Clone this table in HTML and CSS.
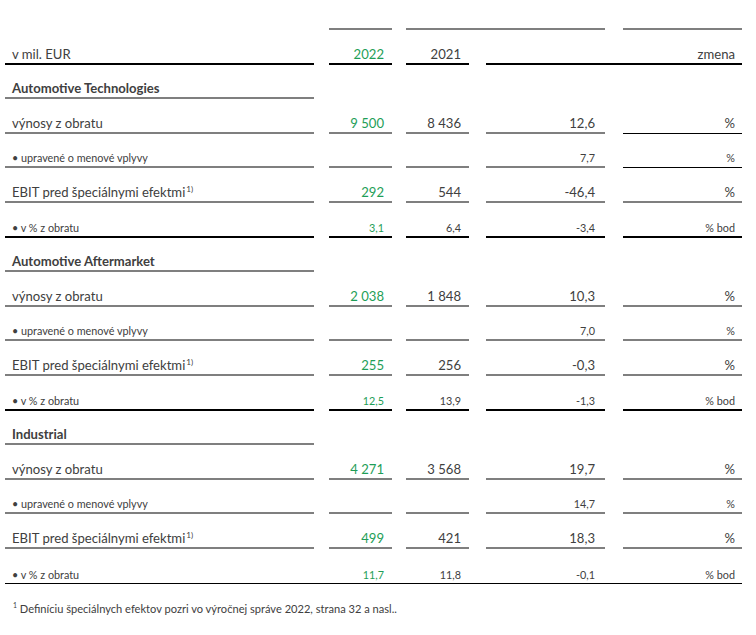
FILE: index.html
```html
<!DOCTYPE html>
<html lang="sk">
<head>
<meta charset="utf-8">
<title>Segmenty</title>
<link rel="stylesheet" href="styles.css">
</head>
<body>
<div class="sheet">
  <div class="row top">
    <div class="cell c3 gray"></div>
    <div class="cell c5-7 gray"></div>
    <div class="cell c9 gray"></div>
  </div>
  <div class="row">
    <div class="cell c1 black lab"><span>v mil. EUR</span></div>
    <div class="cell c3 black num green"><span>2022</span></div>
    <div class="cell c5 black num"><span>2021</span></div>
    <div class="cell c7-9 black unit"><span>zmena</span></div>
  </div>

  <div class="row">
    <div class="cell c1 gray lab bold"><span>Automotive Technologies</span></div>
  </div>
  <div class="row">
    <div class="cell c1 gray lab"><span>výnosy z obratu</span></div>
    <div class="cell c3 gray num green"><span>9 500</span></div>
    <div class="cell c5 gray num"><span>8 436</span></div>
    <div class="cell c7 gray chg"><span>12,6</span></div>
    <div class="cell c9 thin unit"><span>%</span></div>
  </div>
  <div class="row small">
    <div class="cell c1 gray lab"><span>• upravené o menové vplyvy</span></div>
    <div class="cell c3 gray num green"></div>
    <div class="cell c5 gray num"></div>
    <div class="cell c7 gray chg"><span>7,7</span></div>
    <div class="cell c9 thin unit"><span>%</span></div>
  </div>
  <div class="row">
    <div class="cell c1 gray lab"><span>EBIT pred špeciálnymi efektmi<sup>1)</sup></span></div>
    <div class="cell c3 gray num green"><span>292</span></div>
    <div class="cell c5 gray num"><span>544</span></div>
    <div class="cell c7 gray chg"><span>-46,4</span></div>
    <div class="cell c9 gray unit"><span>%</span></div>
  </div>
  <div class="row small">
    <div class="cell c1 black lab"><span>• v % z obratu</span></div>
    <div class="cell c3 black num green"><span>3,1</span></div>
    <div class="cell c5 black num"><span>6,4</span></div>
    <div class="cell c7 black chg"><span>-3,4</span></div>
    <div class="cell c9 black unit"><span>% bod</span></div>
  </div>

  <div class="row">
    <div class="cell c1 gray lab bold"><span>Automotive Aftermarket</span></div>
  </div>
  <div class="row">
    <div class="cell c1 gray lab"><span>výnosy z obratu</span></div>
    <div class="cell c3 gray num green"><span>2 038</span></div>
    <div class="cell c5 gray num"><span>1 848</span></div>
    <div class="cell c7 gray chg"><span>10,3</span></div>
    <div class="cell c9 gray unit"><span>%</span></div>
  </div>
  <div class="row small">
    <div class="cell c1 gray lab"><span>• upravené o menové vplyvy</span></div>
    <div class="cell c3 gray num green"></div>
    <div class="cell c5 gray num"></div>
    <div class="cell c7 gray chg"><span>7,0</span></div>
    <div class="cell c9 gray unit"><span>%</span></div>
  </div>
  <div class="row">
    <div class="cell c1 gray lab"><span>EBIT pred špeciálnymi efektmi<sup>1)</sup></span></div>
    <div class="cell c3 gray num green"><span>255</span></div>
    <div class="cell c5 gray num"><span>256</span></div>
    <div class="cell c7 gray chg"><span>-0,3</span></div>
    <div class="cell c9 gray unit"><span>%</span></div>
  </div>
  <div class="row small">
    <div class="cell c1 black lab"><span>• v % z obratu</span></div>
    <div class="cell c3 black num green"><span>12,5</span></div>
    <div class="cell c5 black num"><span>13,9</span></div>
    <div class="cell c7 black chg"><span>-1,3</span></div>
    <div class="cell c9 black unit"><span>% bod</span></div>
  </div>

  <div class="row">
    <div class="cell c1 gray lab bold"><span>Industrial</span></div>
  </div>
  <div class="row">
    <div class="cell c1 gray lab"><span>výnosy z obratu</span></div>
    <div class="cell c3 gray num green"><span>4 271</span></div>
    <div class="cell c5 gray num"><span>3 568</span></div>
    <div class="cell c7 gray chg"><span>19,7</span></div>
    <div class="cell c9 gray unit"><span>%</span></div>
  </div>
  <div class="row small">
    <div class="cell c1 gray lab"><span>• upravené o menové vplyvy</span></div>
    <div class="cell c3 gray num green"></div>
    <div class="cell c5 gray num"></div>
    <div class="cell c7 gray chg"><span>14,7</span></div>
    <div class="cell c9 gray unit"><span>%</span></div>
  </div>
  <div class="row">
    <div class="cell c1 gray lab"><span>EBIT pred špeciálnymi efektmi<sup>1)</sup></span></div>
    <div class="cell c3 gray num green"><span>499</span></div>
    <div class="cell c5 gray num"><span>421</span></div>
    <div class="cell c7 gray chg"><span>18,3</span></div>
    <div class="cell c9 gray unit"><span>%</span></div>
  </div>
  <div class="row small last">
    <div class="cell c1 lab"><span>• v % z obratu</span></div>
    <div class="cell c3 num green"><span>11,7</span></div>
    <div class="cell c5 num"><span>11,8</span></div>
    <div class="cell c7 chg"><span>-0,1</span></div>
    <div class="cell c9 unit"><span>% bod</span></div>
  </div>

  <p class="note"><sup>1</sup> Definíciu špeciálnych efektov pozri vo výročnej správe 2022, strana 32 a nasl..</p>
</div>
</body>
</html>
```

FILE: styles.css
```css
html, body {
  margin: 0;
  padding: 0;
  background: #ffffff;
}

body {
  font-family: Lato, "Open Sans", "Liberation Sans", sans-serif;
  color: #404040;
}

.sheet {
  width: 737px;
  padding-left: 5px;
}

.row {
  display: grid;
  grid-template-columns: 309px 15px 63px 14px 63px 17px 119px 18px 119px;
  height: 34.6px;
  font-size: 13.1px;
  line-height: 16px;
}

.row.top {
  height: 30px;
}

.row.small {
  font-size: 10.8px;
  line-height: 13px;
}

.row.last {
  border-bottom: 1px solid #000;
  height: 33.6px;
}

.cell {
  display: flex;
  align-items: flex-end;
  box-sizing: border-box;
  padding-bottom: 1px;
  white-space: nowrap;
}

.row.small .cell {
  padding-bottom: 2px;
}

.c1 { grid-column: 1; }
.c3 { grid-column: 3; }
.c5 { grid-column: 5; }
.c7 { grid-column: 7; }
.c9 { grid-column: 9; }
.c5-7 { grid-column: 5 / 8; }
.c7-9 { grid-column: 7 / 10; }

.gray { border-bottom: 2px solid #7f7f7f; }
.black { border-bottom: 2px solid #000; }
.thin { border-bottom: 1px solid #000; }
.row .thin.unit { padding-bottom: 2px; }
.row.small .thin.unit { padding-bottom: 3px; }

.lab {
  padding-left: 7px;
}

.bold {
  font-weight: 700;
}

.num {
  justify-content: flex-end;
  padding-right: 8px;
}

.chg {
  justify-content: flex-end;
  padding-right: 10px;
}

.unit {
  justify-content: flex-end;
  padding-right: 7px;
}

.green {
  color: #1e9e57;
}

sup {
  font-size: 0.62em;
  line-height: 0;
  vertical-align: 0.6em;
  margin-left: 1px;
}

.note {
  margin: 0;
  padding: 17px 0 0 7px;
  font-size: 11.1px;
  line-height: 15px;
}
```
